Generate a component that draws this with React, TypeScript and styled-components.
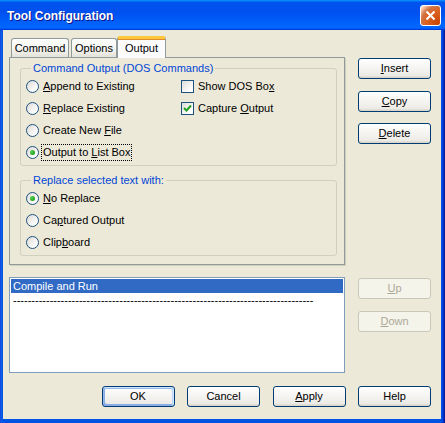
import { FC, ReactNode } from 'react';
import styled, { createGlobalStyle, css } from 'styled-components';

const GlobalStyle = createGlobalStyle`
  html, body {
    margin: 0;
    padding: 0;
    background: #ffffff;
  }
  body {
    font-family: 'Liberation Sans', Arial, sans-serif;
    font-size: 11px;
    color: #000000;
  }
`;

const Window = styled.div`
  width: 445px;
  height: 423px;
  display: flex;
  flex-direction: column;
  background: linear-gradient(90deg, #0831d9 0, #166aee 1px, #0855dd 2px, #0054e3 3px, #0054e3 calc(100% - 4px), #003bda calc(100% - 2px), #00138c 100%);
  box-sizing: border-box;
`;

const TitleBar = styled.div`
  height: 30px;
  flex: none;
  display: flex;
  align-items: center;
  justify-content: space-between;
  padding: 0 4px 0 7px;
  background: linear-gradient(180deg, #0997ff, #0053ee 8%, #0050ee 40%, #0066ff 88%, #0066ff 93%, #005bff 95%, #003dd7 96%, #003dd7);
`;

const Title = styled.span`
  color: #ffffff;
  font-family: 'Liberation Sans', Arial, sans-serif;
  font-weight: bold;
  font-size: 12px;
  text-shadow: 1px 1px #0f1089;
  padding-top: 1px;
`;

const CloseButton = styled.div`
  width: 21px;
  height: 21px;
  box-sizing: border-box;
  border: 1px solid #ffffff;
  border-radius: 3px;
  background: radial-gradient(circle at 90% 90%, #cc4600 0%, #dc6527 55%, #cd7546 70%, #ffccb2 90%, #ffffff 100%);
  display: flex;
  align-items: center;
  justify-content: center;
  margin-top: 1px;
`;

const Client = styled.div`
  flex: 1;
  margin: 0 4px 4px 3px;
  background: #ece9d8;
  padding: 6px 10px 12px 6px;
  display: flex;
  flex-direction: column;
`;

const TopSection = styled.div`
  display: flex;
  gap: 13px;
`;

const LeftColumn = styled.div`
  width: 336px;
  display: flex;
  flex-direction: column;
`;

const SideColumn = styled.div<{ $top: number }>`
  width: 73px;
  padding-top: ${({ $top }) => $top}px;
  display: flex;
  flex-direction: column;
  gap: 11.5px;
`;

const TabRow = styled.div`
  height: 21px;
  display: flex;
  align-items: flex-end;
  gap: 2px;
  padding-left: 2px;
  position: relative;
  z-index: 1;
`;

const Tab = styled.div<{ $active?: boolean; $width: number }>`
  position: relative;
  box-sizing: border-box;
  width: ${({ $width }) => $width}px;
  height: 19px;
  display: flex;
  align-items: center;
  justify-content: center;
  border: 1px solid #919b9c;
  border-bottom: none;
  border-radius: 3px 3px 0 0;
  background: linear-gradient(180deg, #ffffff, #f3f3ef 60%, #e3e1d8);
  ${({ $active }) =>
    $active &&
    css`
      height: 22px;
      margin: 0 0 -1px -2px;
      padding-bottom: 2px;
      border-top: 3px solid #ffc83c;
      box-shadow: inset 0 1px #e68b2c;
      background: #fcfcfe;
    `}
`;

const Panel = styled.div`
  height: 208px;
  box-sizing: border-box;
  border: 1px solid #919b9c;
  box-shadow: 1px 1px 0 #d0cebf;
  background: #ece9d8;
  padding: 4px 8px 0 10px;
  display: flex;
  flex-direction: column;
  gap: 8px;
`;

const Group = styled.fieldset`
  margin: 0;
  min-width: 0;
  width: 317px;
  box-sizing: border-box;
  border: 1px solid #d0d0bf;
  border-radius: 3px;
  padding: 0 0 2px 5px;
`;

const GroupLabel = styled.legend`
  color: #0046d5;
  padding: 0 2px;
  margin-left: 5px;
  line-height: 13px;
`;

const GroupBody = styled.div`
  display: flex;
`;

const OptionColumn = styled.div<{ $width?: number }>`
  display: flex;
  flex-direction: column;
  width: ${({ $width }) => ($width ? `${$width}px` : 'auto')};
`;

const OptionRow = styled.div`
  height: 22px;
  display: flex;
  align-items: center;
  gap: 3px;
`;

const RadioCircle = styled.span<{ $checked?: boolean }>`
  position: relative;
  width: 13px;
  height: 13px;
  box-sizing: border-box;
  border: 1px solid #1c5180;
  border-radius: 50%;
  background: linear-gradient(135deg, #dcdad5, #ffffff 80%);
  flex: none;
  ${({ $checked }) =>
    $checked &&
    css`
      &::after {
        content: '';
        position: absolute;
        left: 3px;
        top: 3px;
        width: 5px;
        height: 5px;
        border-radius: 50%;
        background: radial-gradient(circle at 35% 35%, #55d351, #21a121 70%);
      }
    `}
`;

const CheckBox = styled.span`
  width: 13px;
  height: 13px;
  box-sizing: border-box;
  border: 1px solid #1c5180;
  background: linear-gradient(135deg, #dcdcd7, #ffffff 80%);
  display: flex;
  align-items: center;
  justify-content: center;
  flex: none;
`;

const Label = styled.span<{ $focus?: boolean }>`
  padding: 1px;
  line-height: 13px;
  white-space: nowrap;
  outline: ${({ $focus }) => ($focus ? '1px dotted #000000' : 'none')};
`;

const ListBox = styled.div`
  width: 336px;
  height: 96px;
  box-sizing: border-box;
  border: 1px solid #7f9db9;
  background: #ffffff;
  padding: 1px;
`;

const ListItem = styled.div<{ $selected?: boolean }>`
  height: 14px;
  line-height: 14px;
  padding-left: 2px;
  white-space: nowrap;
  overflow: hidden;
  color: ${({ $selected }) => ($selected ? '#ffffff' : '#000000')};
  background: ${({ $selected }) => ($selected ? '#316ac5' : 'transparent')};
`;

const MiddleSection = styled.div`
  display: flex;
  gap: 13px;
  margin-top: 12px;
`;

const Footer = styled.div`
  margin-top: 13px;
  display: flex;
  justify-content: flex-end;
  gap: 12.5px;
`;

const Button = styled.div<{ $default?: boolean; $disabled?: boolean }>`
  width: 73px;
  height: 21px;
  box-sizing: border-box;
  border: 1px solid #003c74;
  border-radius: 3px;
  background: linear-gradient(180deg, #ffffff, #ecebe6 86%, #d6d0c5);
  display: flex;
  align-items: center;
  justify-content: center;
  line-height: 13px;
  ${({ $default }) =>
    $default &&
    css`
      box-shadow: inset -1px 1px #cee7ff, inset 1px 2px #98b8ea, inset -2px 2px #bcd4f6, inset 1px -1px #89ade4, inset 2px -2px #89ade4;
    `}
  ${({ $disabled }) =>
    $disabled &&
    css`
      border-color: #c9c7ba;
      background: #f5f4ea;
      color: #aca899;
    `}
`;

const Radio: FC<{ checked?: boolean; focus?: boolean; children: ReactNode }> = ({ checked, focus, children }) => (
  <OptionRow>
    <RadioCircle $checked={checked} />
    <Label $focus={focus}>{children}</Label>
  </OptionRow>
);

const Check: FC<{ checked?: boolean; children: ReactNode }> = ({ checked, children }) => (
  <OptionRow>
    <CheckBox>
      {checked && (
        <svg width="9" height="9" viewBox="0 0 9 9">
          <path d="M1 4 L3.5 6.5 L8 1.5" stroke="#21a121" strokeWidth="2" fill="none" />
        </svg>
      )}
    </CheckBox>
    <Label>{children}</Label>
  </OptionRow>
);

const DASHES = '-'.repeat(82);

export default function App() {
  return (
    <>
      <GlobalStyle />
      <Window>
        <TitleBar>
          <Title>Tool Configuration</Title>
          <CloseButton>
            <svg width="11" height="11" viewBox="0 0 11 11">
              <path d="M1.5 1.5 L9.5 9.5 M9.5 1.5 L1.5 9.5" stroke="#ffffff" strokeWidth="2" />
            </svg>
          </CloseButton>
        </TitleBar>
        <Client>
          <TopSection>
            <LeftColumn>
              <TabRow>
                <Tab $width={58}>Command</Tab>
                <Tab $width={46}>Options</Tab>
                <Tab $width={49} $active>
                  Output
                </Tab>
              </TabRow>
              <Panel>
                <Group>
                  <GroupLabel>Command Output (DOS Commands)</GroupLabel>
                  <GroupBody>
                    <OptionColumn $width={155}>
                      <Radio>
                        <u>A</u>ppend to Existing
                      </Radio>
                      <Radio>
                        <u>R</u>eplace Existing
                      </Radio>
                      <Radio>
                        Create New <u>F</u>ile
                      </Radio>
                      <Radio checked focus>
                        Output to <u>L</u>ist Box
                      </Radio>
                    </OptionColumn>
                    <OptionColumn>
                      <Check>
                        Show DOS Bo<u>x</u>
                      </Check>
                      <Check checked>
                        Capture <u>O</u>utput
                      </Check>
                    </OptionColumn>
                  </GroupBody>
                </Group>
                <Group>
                  <GroupLabel>Replace selected text with:</GroupLabel>
                  <OptionColumn>
                    <Radio checked>
                      <u>N</u>o Replace
                    </Radio>
                    <Radio>
                      Ca<u>p</u>tured Output
                    </Radio>
                    <Radio>
                      Clip<u>b</u>oard
                    </Radio>
                  </OptionColumn>
                </Group>
              </Panel>
            </LeftColumn>
            <SideColumn $top={22}>
              <Button>
                <span>
                  <u>I</u>nsert
                </span>
              </Button>
              <Button>
                <span>
                  <u>C</u>opy
                </span>
              </Button>
              <Button>
                <span>
                  <u>D</u>elete
                </span>
              </Button>
            </SideColumn>
          </TopSection>
          <MiddleSection>
            <ListBox>
              <ListItem $selected>Compile and Run</ListItem>
              <ListItem>{DASHES}</ListItem>
            </ListBox>
            <SideColumn $top={1}>
              <Button $disabled>
                <span>
                  <u>U</u>p
                </span>
              </Button>
              <Button $disabled>
                <span>
                  <u>D</u>own
                </span>
              </Button>
            </SideColumn>
          </MiddleSection>
          <Footer>
            <Button $default>OK</Button>
            <Button>Cancel</Button>
            <Button>
              <span>
                <u>A</u>pply
              </span>
            </Button>
            <Button>Help</Button>
          </Footer>
        </Client>
      </Window>
    </>
  );
}
